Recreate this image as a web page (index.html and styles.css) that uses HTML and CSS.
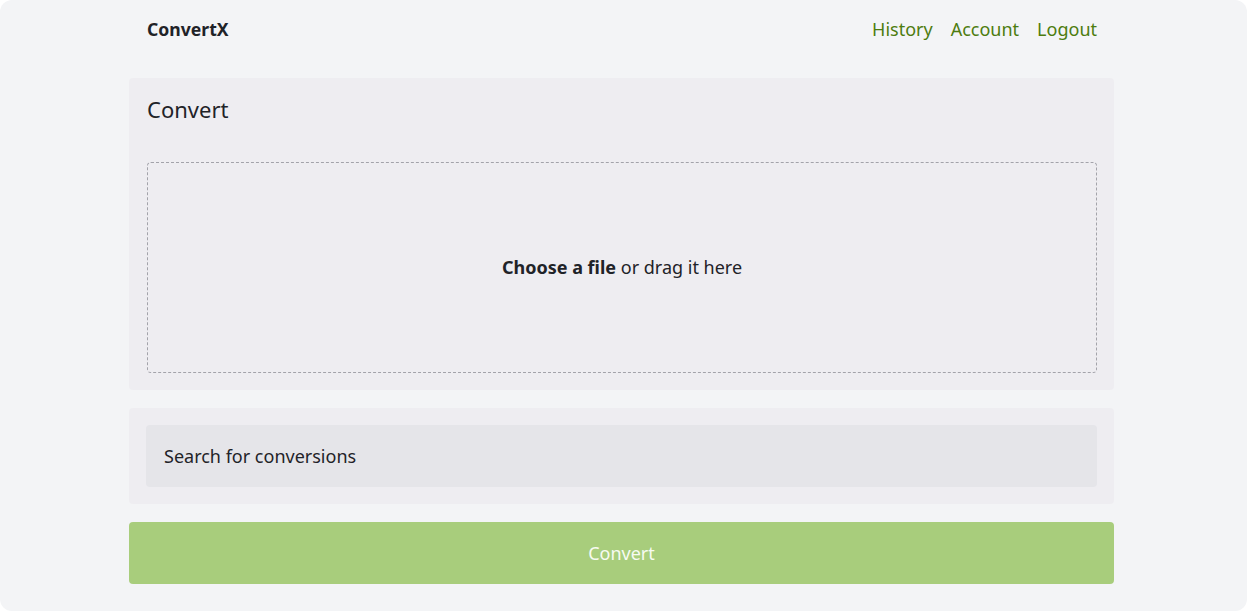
FILE: index.html
```html
<!DOCTYPE html>
<html lang="en">
<head>
<meta charset="utf-8">
<title>ConvertX</title>
<link rel="stylesheet" href="styles.css">
</head>
<body>
<div class="app">
  <div class="container">
    <header class="topbar">
      <a class="brand" href="#">ConvertX</a>
      <nav class="nav">
        <a href="#">History</a>
        <a href="#">Account</a>
        <a href="#">Logout</a>
      </nav>
    </header>
    <main class="main">
      <section class="card upload">
        <h1 class="card-title">Convert</h1>
        <div class="dropzone">
          <span><strong>Choose a file</strong> or drag it here</span>
        </div>
      </section>
      <section class="card search">
        <div class="search-input">Search for conversions</div>
      </section>
      <button class="convert-btn" type="button">Convert</button>
    </main>
  </div>
</div>
</body>
</html>
```

FILE: styles.css
```css
* { box-sizing: border-box; }
html, body { margin: 0; padding: 0; background: #ffffff; }
body {
  font-family: "Noto Sans", "Open Sans", sans-serif;
  color: #1f2328;
}
.app {
  min-height: 611px;
  height: 100vh;
  background: #f3f4f6;
  border-radius: 12px;
  padding-right: 4px;
  display: flex;
  justify-content: center;
}
.container {
  width: 985px;
  display: flex;
  flex-direction: column;
}
.topbar {
  height: 58px;
  display: flex;
  align-items: center;
  justify-content: space-between;
  padding: 0 17px 0 18px;
}
.brand {
  font-weight: 700;
  font-size: 17.6px;
  color: #1f2328;
  text-decoration: none;
}
.nav {
  display: flex;
  gap: 18px;
}
.nav a {
  font-size: 18px;
  color: #4d7c0f;
  text-decoration: none;
}
.main {
  margin-top: 20px;
  display: flex;
  flex-direction: column;
  gap: 18px;
}
.card {
  background: #eeedf1;
  border-radius: 4px;
  padding: 17px;
}
.upload { padding: 14px 17px 17px 18px; }
.card-title {
  margin: 0;
  font-weight: 400;
  font-size: 22px;
  line-height: 34px;
}
.dropzone {
  margin-top: 36px;
  height: 211px;
  border: 1px dashed #a3a3aa;
  border-radius: 4px;
  display: flex;
  align-items: center;
  justify-content: center;
  font-size: 18px;
  padding-bottom: 2px;
}
.dropzone strong { font-weight: 700; }
.search-input {
  height: 62px;
  background: #e5e5e9;
  border-radius: 4px;
  display: flex;
  align-items: center;
  padding: 0 18px;
  font-size: 18px;
  color: #1f2328;
}
.convert-btn {
  height: 62px;
  border: 0;
  border-radius: 4px;
  background: #a8cd7c;
  color: #f7fbf2;
  font-family: inherit;
  font-size: 18px;
}
```
